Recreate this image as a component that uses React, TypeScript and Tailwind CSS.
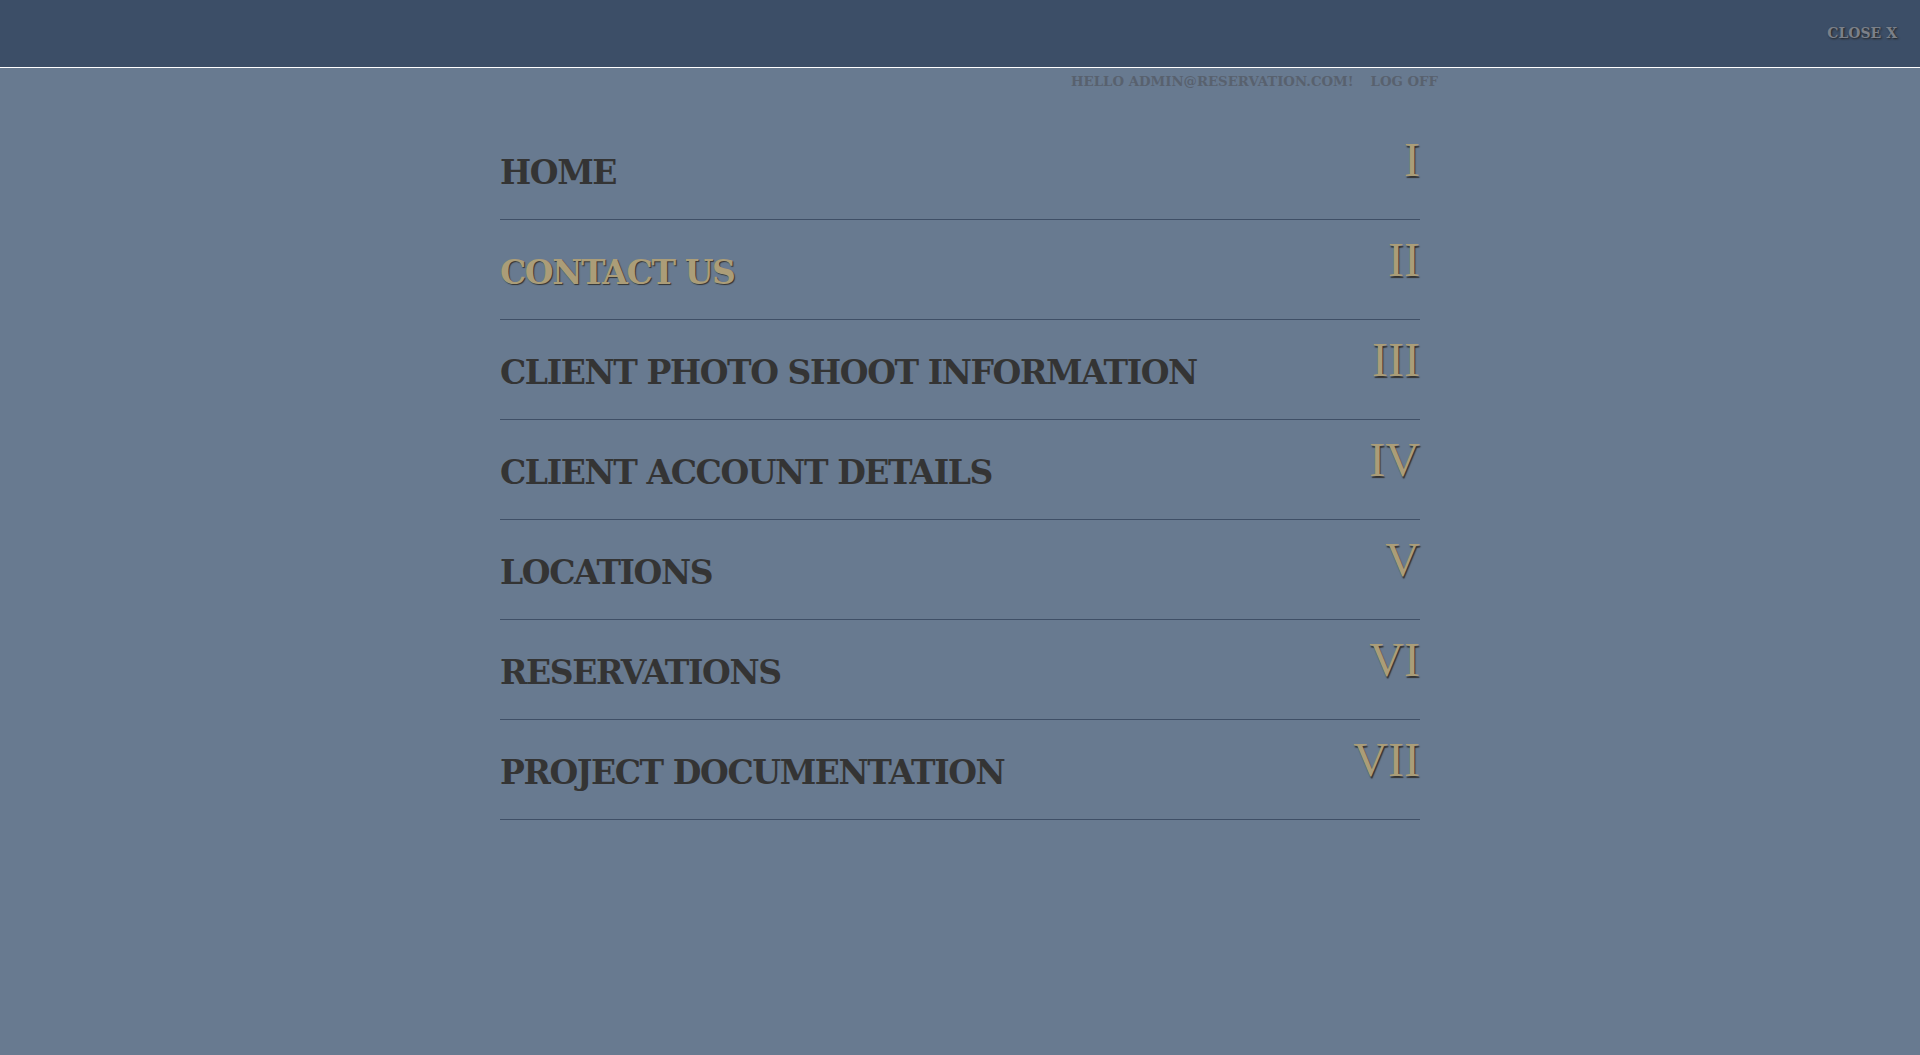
import React from "react";

const items = [
  { label: "HOME", num: "I", active: false },
  { label: "CONTACT US", num: "II", active: true },
  { label: "CLIENT PHOTO SHOOT INFORMATION", num: "III", active: false },
  { label: "CLIENT ACCOUNT DETAILS", num: "IV", active: false },
  { label: "LOCATIONS", num: "V", active: false },
  { label: "RESERVATIONS", num: "VI", active: false },
  { label: "PROJECT DOCUMENTATION", num: "VII", active: false },
];

export default function App() {
  return (
    <div className="min-h-[1055px] bg-[#687a90] [font-family:'DejaVu_Serif',serif]">
      <header className="h-[68px] bg-[#3c4e67] border-b border-white flex items-center justify-end pr-[23px]">
        <span className="text-[14px] font-bold text-[#7b8089] [text-shadow:1px_1px_2px_#222]">
          CLOSE X
        </span>
      </header>
      <div className="w-[960px] mx-auto flex justify-end gap-[17px] pt-[4px] pr-[2px] text-[13.3px] font-bold text-[#58616e]">
        <span>HELLO ADMIN@RESERVATION.COM!</span>
        <span>LOG OFF</span>
      </div>
      <nav className="w-[920px] mx-auto mt-[28px]">
        {items.map((it) => (
          <div
            key={it.label}
            className="h-[100px] border-b border-[#3f4f66] flex justify-between"
          >
            <span
              className={`pt-[36px] text-[33px] tracking-[-1.4px] font-bold leading-none ${
                it.active
                  ? "text-[#ab9d78] [text-shadow:1px_1px_1px_#333]"
                  : "text-[#343434]"
              }`}
            >
              {it.label}
            </span>
            <span className="pt-[16px] [font-family:'Liberation_Serif',serif] text-[48px] leading-none text-[#ab9d78] [text-shadow:1px_2px_1px_#333]">
              {it.num}
            </span>
          </div>
        ))}
      </nav>
    </div>
  );
}
